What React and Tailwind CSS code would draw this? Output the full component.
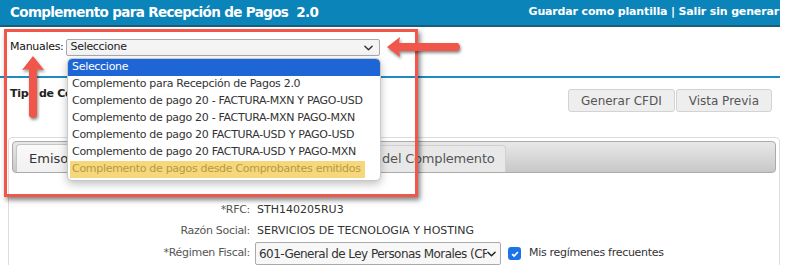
import React from "react";

const items = [
  "Complemento para Recepción de Pagos 2.0",
  "Complemento de pago 20 - FACTURA-MXN Y PAGO-USD",
  "Complemento de pago 20 - FACTURA-MXN PAGO-MXN",
  "Complemento de pago 20 FACTURA-USD Y PAGO-USD",
  "Complemento de pago 20 FACTURA-USD Y PAGO-MXN",
];

function Chevron({ className }) {
  return (
    <svg viewBox="0 0 10 6" className={className} fill="none" stroke="currentColor" strokeWidth="1.6" strokeLinecap="round" strokeLinejoin="round">
      <path d="M1 1l4 4 4-4" />
    </svg>
  );
}

export default function App() {
  return (
    <div className="relative w-[788px] h-[265px] overflow-hidden bg-white font-['DejaVu_Sans',sans-serif] text-[11px] text-[#333]">
      <div className="w-[780px]">
        {/* header */}
        <div className="h-[27px] bg-[#0b84ba] border-b-2 border-[#1b5e7c] flex items-center justify-between pl-[10px] pr-[1px]">
          <span className="text-white font-bold text-[13.5px] tracking-[-0.65px]">Complemento para Recepción de Pagos&nbsp; 2.0</span>
          <span className="text-white font-bold text-[11px] tracking-[-0.15px]">Guardar como plantilla | Salir sin generar</span>
        </div>

        {/* manuales */}
        <div className="flex items-center gap-[3px] pl-[10px] pt-[12px]">
          <span className="text-[#111] tracking-[-0.3px]">Manuales:</span>
          <div className="w-[314px] h-[17px] border border-[#a9a9a9] rounded-[2px] bg-[#f4f4f4] flex items-center justify-between pl-[3px] pr-[6px] text-[#222] tracking-[-0.3px]">
            Seleccione
            <Chevron className="w-[9px] h-[6px] text-[#333]" />
          </div>
        </div>
        <div className="mt-[20px] h-[2px] bg-[#1d8cc2]" />

        {/* tipo + botones */}
        <div className="flex items-start justify-between pl-[10px] pr-[8px] pt-[11px]">
          <span className="font-bold text-[#222] tracking-[-0.3px] -mt-[3px]">Tipo de Comprobante:</span>
          <div className="flex gap-[1px]">
            <button className="h-[23px] px-[12px] bg-[#eeeeee] border border-[#d3d3d3] rounded-[3px] text-[#555] text-[12px]">Generar CFDI</button>
            <button className="h-[23px] px-[12px] bg-[#eeeeee] border border-[#d3d3d3] rounded-[3px] text-[#555] text-[12px]">Vista Previa</button>
          </div>
        </div>

        {/* tabs panel */}
        <div className="ml-[8px] mt-[25px] border border-[#dddddd] rounded-[4px] p-[3px] h-[140px]">
          <div className="h-[32px] rounded-[4px] border border-[#aaaaaa] bg-gradient-to-b from-[#e8e8e8] to-[#c8c8c8] flex items-end pl-[3px] gap-[2px]">
            <div className="h-[28px] px-[12px] rounded-t-[4px] border border-b-0 border-[#c5c5c5] bg-gradient-to-b from-[#fafafa] to-[#f0f0f0] flex items-center text-[13px] text-[#333]">
              Emisor
            </div>
            <div className="h-[27px] w-[417px] rounded-t-[4px] border border-b-0 border-[#d0d0d0] bg-[#e8e8e8] flex items-center justify-end pr-[10px] text-[13px] text-[#555] tracking-[-0.2px]">
              Datos del Complemento
            </div>
          </div>
          <div className="mt-[27px] grid grid-cols-[238px_1fr] grid-rows-[21px_21px_23px] gap-x-[7px] items-center">
            <span className="text-right text-[#555] tracking-[-0.3px]">*RFC:</span>
            <span className="text-[#333]">STH140205RU3</span>
            <span className="text-right text-[#555] tracking-[-0.3px]">Razón Social:</span>
            <span className="text-[#333]">SERVICIOS DE TECNOLOGIA Y HOSTING</span>
            <span className="text-right text-[#555] tracking-[-0.3px]">*Régimen Fiscal:</span>
            <div className="flex items-center gap-[8px] -ml-[2px]">
              <div className="w-[246px] h-[23px] border border-[#aaaaaa] rounded-[2px] bg-[#f7f7f7] flex items-center justify-between pl-[3px] pr-[4px] text-[12px] tracking-[-0.55px] text-[#333] overflow-hidden whitespace-nowrap">
                <span className="overflow-hidden">601-General de Ley Personas Morales (CFDI)</span>
                <Chevron className="w-[9px] h-[6px] shrink-0 text-[#222]" />
              </div>
              <span className="-ml-[1px] w-[13px] h-[13px] rounded-[3px] bg-[#1a73e8] flex items-center justify-center">
                <svg viewBox="0 0 12 12" className="w-[10px] h-[10px]" fill="none" stroke="white" strokeWidth="2"><path d="M2.5 6.2l2.4 2.4 4.6-5" /></svg>
              </span>
              <span className="text-[#333] tracking-[-0.3px]">Mis regímenes frecuentes</span>
            </div>
          </div>
        </div>
      </div>

      {/* open dropdown list */}
      <div className="absolute left-[67px] top-[58px] w-[314px] bg-white border border-[#c8c8c8] rounded-[5px] shadow-[0_3px_8px_rgba(0,0,0,0.25)] text-[11px] tracking-[-0.3px] text-[#333] overflow-hidden">
        <div className="h-[17px] bg-[#1e66d5] text-white pl-[4px] flex items-center rounded-t-[4px]">Seleccione</div>
        {items.map((t) => (
          <div key={t} className="h-[17px] pl-[4px] flex items-center whitespace-nowrap">{t}</div>
        ))}
        <div className="h-[19px] pl-[2px] pb-[2px] flex items-start">
          <span className="h-[17px] px-[2px] pr-[4px] flex items-center whitespace-nowrap bg-[#f6d77c] text-[#b89a3f]">Complemento de pagos desde Comprobantes emitidos</span>
        </div>
      </div>

      {/* annotation: red box */}
      <div className="absolute left-[4px] top-[29px] w-[414px] h-[168px] border-[3px] border-[#f0564a] shadow-[2px_3px_5px_rgba(0,0,0,0.5)]" />

      {/* annotation: up arrow */}
      <svg className="absolute left-[20px] top-[54px] w-[26px] h-[68px]" viewBox="0 0 26 68" style={{ filter: "drop-shadow(1px 2px 1.5px rgba(0,0,0,0.45))" }}>
        <path d="M13 2 L24 16 L17 15 L17 62 Q13 66 9 62 L9 15 L2 16 Z" fill="#f0564a" />
      </svg>

      {/* annotation: left arrow */}
      <svg className="absolute left-[384px] top-[36px] w-[80px] h-[24px]" viewBox="0 0 80 24" style={{ filter: "drop-shadow(1px 2px 1.5px rgba(0,0,0,0.45))" }}>
        <path d="M3 11 L16 1 L15 7 L74 7 Q78 11 74 15 L15 15 L16 21 Z" fill="#f0564a" />
      </svg>
    </div>
  );
}
